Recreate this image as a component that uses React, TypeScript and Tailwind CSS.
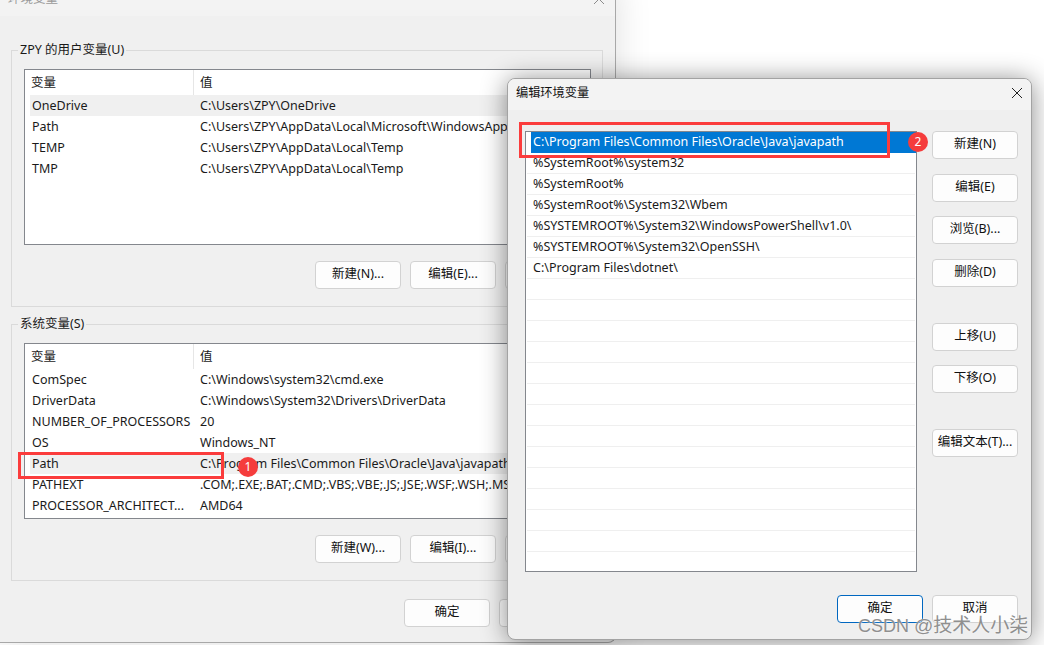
import React from "react";

const font = "font-['Noto_Sans','Noto_Sans_CJK_SC',sans-serif]";

function Btn({ label, className = "" }: { label: string; className?: string }) {
  return (
    <button className={`w-[86px] h-[28px] shrink-0 rounded-[4px] border border-[#d2d2d2] bg-[#fdfdfd] pb-[2px] text-[12.5px] leading-[24px] text-[#111] text-center whitespace-nowrap ${className}`}>
      {label}
    </button>
  );
}

function VarList({ rows, hi }: { rows: [string, string][]; hi: number }) {
  return (
    <div className="h-[176px] border border-[#84878d] bg-white overflow-hidden text-[12.5px] text-[#1a1a1a]">
      <div className="flex h-[25px] items-center">
        <div className="w-[169px] h-full border-r border-[#e6e6e6] pl-[6px] leading-[25px]">变量</div>
        <div className="pl-[6px] leading-[25px]">值</div>
      </div>
      {rows.map(([a, b], i) => (
        <div key={a} className={`flex h-[21px] ml-[5px] items-center leading-[21px] whitespace-nowrap ${i === hi ? "bg-[#f0f0f0]" : ""}`}>
          <div className="w-[170px] pl-[2px] overflow-hidden">{a}</div>
          <div>{b}</div>
        </div>
      ))}
    </div>
  );
}

function Group({ label, rows, hi, btns }: { label: string; rows: [string, string][]; hi: number; btns: string[] }) {
  return (
    <div className="relative h-[257px] border border-[#dadada] pl-[12px] pr-[11px] pt-[18px]">
      <div className="absolute left-[6px] top-[-11px] bg-[#f0f0f0] px-[2px] text-[12.5px] leading-[20px] text-[#1a1a1a]">{label}</div>
      <VarList rows={rows} hi={hi} />
      <div className="mt-[16px] flex justify-end gap-[9px]">
        {btns.map((b) => (
          <Btn key={b} label={b} />
        ))}
      </div>
    </div>
  );
}

const userRows: [string, string][] = [
  ["OneDrive", "C:\\Users\\ZPY\\OneDrive"],
  ["Path", "C:\\Users\\ZPY\\AppData\\Local\\Microsoft\\WindowsApps"],
  ["TEMP", "C:\\Users\\ZPY\\AppData\\Local\\Temp"],
  ["TMP", "C:\\Users\\ZPY\\AppData\\Local\\Temp"],
];

const sysRows: [string, string][] = [
  ["ComSpec", "C:\\Windows\\system32\\cmd.exe"],
  ["DriverData", "C:\\Windows\\System32\\Drivers\\DriverData"],
  ["NUMBER_OF_PROCESSORS", "20"],
  ["OS", "Windows_NT"],
  ["Path", "C:\\Program Files\\Common Files\\Oracle\\Java\\javapath"],
  ["PATHEXT", ".COM;.EXE;.BAT;.CMD;.VBS;.VBE;.JS;.JSE;.WSF;.WSH;.MSC"],
  ["PROCESSOR_ARCHITECT...", "AMD64"],
];

const paths = [
  "C:\\Program Files\\Common Files\\Oracle\\Java\\javapath",
  "%SystemRoot%\\system32",
  "%SystemRoot%",
  "%SystemRoot%\\System32\\Wbem",
  "%SYSTEMROOT%\\System32\\WindowsPowerShell\\v1.0\\",
  "%SYSTEMROOT%\\System32\\OpenSSH\\",
  "C:\\Program Files\\dotnet\\",
  "", "", "", "", "", "", "", "", "", "", "", "", "", "",
];

function Close({ color }: { color: string }) {
  return (
    <svg width="12" height="12" viewBox="0 0 12 12" fill="none" stroke={color} strokeWidth="1">
      <path d="M1 1L11 11M11 1L1 11" />
    </svg>
  );
}

export default function App() {
  return (
    <div className={`relative w-[1044px] h-[645px] overflow-hidden bg-white ${font}`}>
      {/* back window */}
      <div className="absolute left-0 top-[-18px] w-[616px] h-[661px] bg-[#f0f0f0] border-r border-b border-[#a8a8a8] rounded-br-[8px] shadow-[0_0_36px_rgba(0,0,0,0.13)]">
        <div className="flex h-[34px] items-center justify-between bg-[#f3f3f3] pl-[8px] pr-[10px]">
          <span className="text-[12.5px] text-[#9a9a9a]">环境变量</span>
          <Close color="#8c8c8c" />
        </div>
        <div className="pl-[11px] pr-[12px] pt-[34px] flex flex-col gap-[17px]">
          <Group label="ZPY 的用户变量(U)" rows={userRows} hi={0} btns={["新建(N)...", "编辑(E)...", "删除(L)"]} />
          <Group label="系统变量(S)" rows={sysRows} hi={4} btns={["新建(W)...", "编辑(I)...", "删除(L)"]} />
          <div className="mt-[1px] flex justify-end gap-[9px] pr-[18px]">
            <Btn label="确定" />
            <Btn label="取消" />
          </div>
        </div>
      </div>

      {/* front window */}
      <div className="absolute left-[507px] top-[78px] w-[525px] h-[562px] rounded-[8px] border border-[#a3a3a3] bg-[#efefef] overflow-hidden shadow-[0_2px_26px_rgba(0,0,0,0.46)]">
        <div className="flex h-[31px] items-center justify-between bg-[#f3f3f3] pb-[3px] pl-[8px] pr-[8px]">
          <span className="text-[12.2px] text-[#111]">编辑环境变量</span>
          <Close color="#222" />
        </div>
        <div className="pl-[17px] pr-[13px] pt-[21px]">
          <div className="flex gap-[15px]">
            <div className="w-[392px] h-[441px] border border-[#84878d] bg-white overflow-hidden text-[12.5px] text-[#1a1a1a]">
              {paths.map((p, i) => (
                <div key={i} className={`h-[21px] whitespace-nowrap leading-[20px] ${i === 0 ? "ml-[5px] bg-[#0078d4] text-white pl-[2px]" : "mx-[1px] border-b border-[#efefef] pl-[6px]"}`}>
                  {p}
                </div>
              ))}
            </div>
            <div className="flex flex-col">
              <Btn label="新建(N)" />
              <Btn label="编辑(E)" className="mt-[15px]" />
              <Btn label="浏览(B)..." className="mt-[14px]" />
              <Btn label="删除(D)" className="mt-[15px]" />
              <Btn label="上移(U)" className="mt-[36px]" />
              <Btn label="下移(O)" className="mt-[14px]" />
              <Btn label="编辑文本(T)..." className="mt-[36px]" />
            </div>
          </div>
          <div className="mt-[23px] flex justify-end gap-[9px]">
            <Btn label="确定" className="!border-[#0067c0] border-[1.5px]" />
            <Btn label="取消" />
          </div>
        </div>
      </div>

      {/* annotations */}
      <div className="absolute left-[18px] top-[452px] w-[206px] h-[27px] border-[3px] border-[#fb3c3c]" />
      <div className="absolute left-[238px] top-[457px] w-[20px] h-[20px] rounded-full bg-[#f53c3c] text-white text-[12px] leading-[20px] text-center">1</div>
      <div className="absolute left-[519px] top-[122px] w-[371px] h-[36px] border-[3px] border-[#fb3c3c]" />
      <div className="absolute left-[908px] top-[132px] w-[20px] h-[20px] rounded-full bg-[#f53c3c] text-white text-[12px] leading-[20px] text-center">2</div>

      {/* watermark */}
      <div className="absolute left-[858px] top-[613px] whitespace-nowrap text-[18px] leading-[26px] text-[#8f8f8f] [text-shadow:0_0_2px_rgba(255,255,255,0.9)] font-['Liberation_Sans','Noto_Sans_CJK_SC',sans-serif]">
        CSDN <span className="text-[19px]">@技术人小柒</span>
      </div>
    </div>
  );
}
